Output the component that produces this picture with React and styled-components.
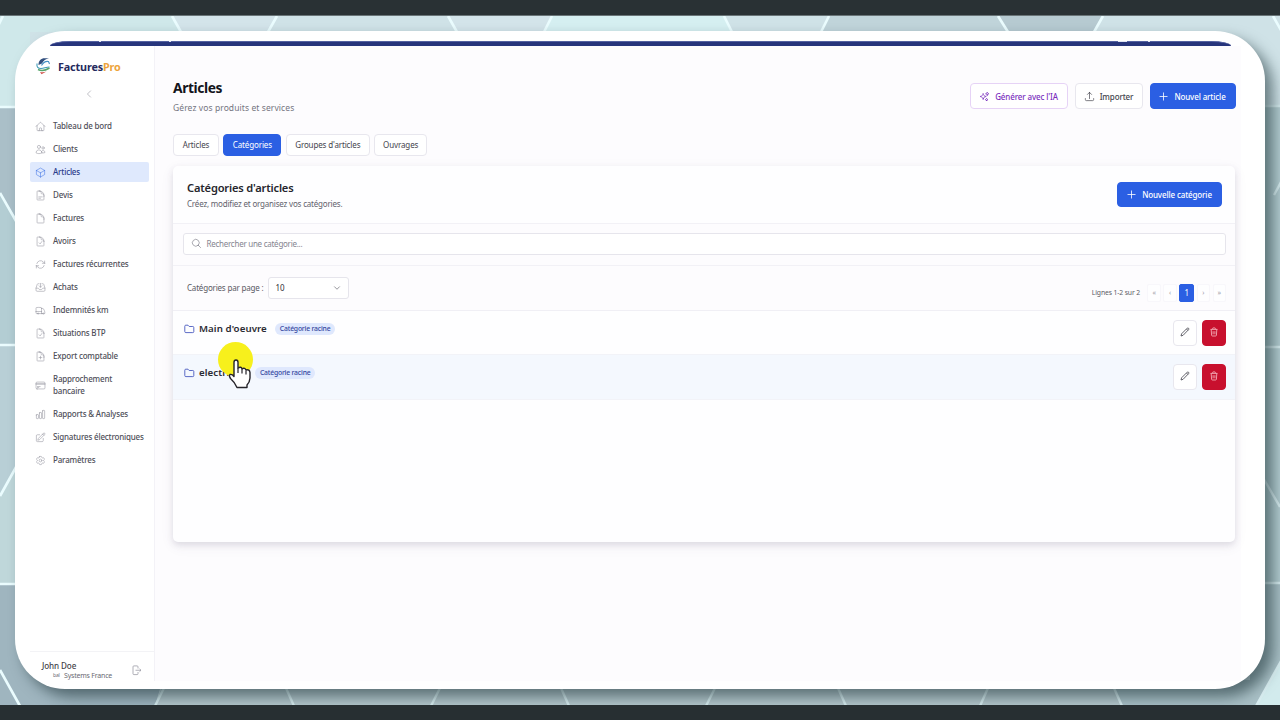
import React from "react";
import styled, { createGlobalStyle } from "styled-components";
import {
  HiOutlineHome, HiOutlineUsers, HiOutlineCube, HiOutlineDocumentCheck, HiOutlineDocument,
  HiOutlineArrowPath, HiOutlineInboxArrowDown, HiOutlineTruck, HiOutlineDocumentText,
  HiOutlineDocumentPlus, HiOutlineCreditCard, HiOutlineChartBar, HiOutlinePencilSquare,
  HiOutlineCog6Tooth, HiOutlineMagnifyingGlass, HiOutlineChevronLeft, HiOutlineChevronDown,
  HiOutlineSparkles, HiOutlineArrowUpTray
} from "react-icons/hi2";

const GlobalStyle = createGlobalStyle`
  * { box-sizing: border-box; }
  body {
    margin: 0;
    font-family: "Noto Sans", "Open Sans", sans-serif;
    overflow: hidden;
  }
  button, input { font-family: inherit; }
`;

const Screen = styled.div`
  position: relative;
  width: 1280px;
  height: 720px;
  padding: 31px 15px;
  overflow: hidden;
  background: #293134;
`;

const Backdrop = styled.svg`
  position: absolute;
  top: 0;
  left: 0;
`;

const Letterbox = styled.div`
  position: absolute;
  left: 0;
  right: 0;
  bottom: 0;
  height: 15px;
  background: #272f32;
`;

const Window = styled.div`
  position: relative;
  width: 1250px;
  height: 658px;
  padding: 10px 24px 8px 15px;
  border-radius: 50px;
  background: #fff;
  box-shadow: 8px 8px 14px rgba(20, 42, 48, 0.55);
  overflow: hidden;
`;

const TopBar = styled.div`
  position: relative;
  height: 5px;
  margin: 0 10px 0 20px;
  background: #27357c;
  border-top: 1px solid #5461a0;
  border-radius: 20px 20px 0 0 / 5px 5px 0 0;
`;

const Notch = styled.i`
  position: absolute;
  top: -1px;
  left: ${props => props.$left}px;
  width: ${props => props.$width || 2}px;
  height: 1px;
  background: #dfe3f2;
`;

const Layout = styled.div`
  display: flex;
  height: 635px;
`;

const Sidebar = styled.aside`
  display: flex;
  flex-direction: column;
  width: 125px;
  border-right: 1px solid #f3f2f7;
`;

const Brand = styled.div`
  display: flex;
  align-items: center;
  gap: 7px;
  height: 40px;
  padding-left: 6px;
  font-size: 10.8px;
  font-weight: 700;
  letter-spacing: -0.14px;
  color: #252a5e;

  em {
    font-style: normal;
    color: #eda43d;
  }
`;

const Collapse = styled.div`
  display: flex;
  justify-content: center;
  height: 30px;
  padding: 3px 6px 0 0;
  color: #9a9aa4;
  font-size: 10px;
`;

const Menu = styled.nav`
  display: flex;
  flex-direction: column;
  gap: 3px;
  margin-right: 5px;
`;

const MenuItem = styled.a`
  display: flex;
  align-items: center;
  gap: 7px;
  height: ${props => props.$tall ? 32 : 20}px;
  padding-left: 5px;
  border-radius: 2px;
  font-size: 8px;
  font-weight: 500;
  line-height: 12px;
  letter-spacing: -0.18px;
  white-space: nowrap;
  color: ${props => props.$active ? "#2b3c8c" : "#4f4f59"};
  background: ${props => props.$active ? "#dfe9fd" : "transparent"};

  span {
    width: ${props => props.$tall ? "70px" : "auto"};
    white-space: ${props => props.$tall ? "normal" : "nowrap"};
  }

  svg {
    flex: none;
    width: 11px;
    height: 11px;
    stroke-width: 1.3;
    color: ${props => props.$active ? "#4d7fe8" : "#9c9ca6"};
  }
`;

const Account = styled.div`
  display: flex;
  align-items: flex-start;
  justify-content: space-between;
  height: 30px;
  margin-top: auto;
  padding: 9px 12px 0 12px;
  border-top: 1px solid #f3f3f6;
  color: #9c9ca6;

  svg {
    margin-top: 4px;
  }
`;

const UserName = styled.div`
  font-size: 8.1px;
  font-weight: 500;
  line-height: 10px;
  letter-spacing: -0.1px;
  color: #3f3f48;
`;

const Company = styled.div`
  display: flex;
  gap: 2px;
  padding-left: 11px;
  font-size: 7px;
  line-height: 10px;
  letter-spacing: -0.2px;
  white-space: nowrap;
  color: #6a6a74;

  small {
    font-size: 5px;
    line-height: 8px;
    width: 9px;
  }
`;

const Main = styled.main`
  flex: 1;
  padding: 30px 6px 0 18px;
  background: #fdfcfe;
`;

const PageHead = styled.header`
  display: flex;
  justify-content: space-between;
  height: 57.5px;
`;

const Title = styled.h1`
  margin: 2px 0 0;
  font-size: 13.8px;
  line-height: 20px;
  letter-spacing: -0.4px;
  color: #14141b;
`;

const Subtitle = styled.p`
  margin: 3px 0 0;
  font-size: 8.5px;
  line-height: 14px;
  letter-spacing: 0.09px;
  color: #74747e;
`;

const Actions = styled.div`
  display: flex;
  gap: 7px;
  padding-top: 7px;
  margin-right: -0.5px;
`;

const Button = styled.button`
  display: flex;
  align-items: center;
  justify-content: center;
  gap: 5px;
  flex: none;
  width: ${props => props.$width}px;
  height: ${props => props.$height || 26}px;
  padding: 0;
  border: 1px solid ${props => props.$border || "#e8e7ee"};
  border-radius: 4px;
  background: #fff;
  color: ${props => props.$color || "#44444d"};
  font-size: 8px;
  font-weight: 500;
  letter-spacing: -0.13px;
  white-space: nowrap;
`;

const PrimaryButton = styled(Button)`
  gap: 6px;
  border-color: #2b5fe3;
  background: #2b5fe3;
  color: #fff;
`;

const Tabs = styled.div`
  display: flex;
  gap: 4.4px;
  margin-bottom: 10px;
`;

const Tab = styled(Button)`
  height: 22px;
  font-weight: 400;
  ${props => props.$active && `
    border-color: #2b5fe3;
    background: #2b5fe3;
    color: #fff;
  `}
`;

const Card = styled.section`
  height: 376px;
  border-radius: 5px;
  background: #fefeff;
  box-shadow: 0 3px 6px rgba(70, 60, 90, 0.13), 0 4px 14px rgba(90, 70, 120, 0.07);
`;

const CardHead = styled.div`
  display: flex;
  align-items: flex-start;
  justify-content: space-between;
  height: 58px;
  padding: 13px 13px 0 14px;
  border-bottom: 1px solid #f2f1f6;

  button {
    margin-top: 3px;
  }
`;

const CardTitle = styled.h2`
  margin: 1px 0 0;
  font-size: 11.1px;
  font-weight: 600;
  line-height: 16px;
  letter-spacing: -0.17px;
  color: #25252d;
`;

const CardText = styled.p`
  margin: 2px 0 0;
  font-size: 8px;
  line-height: 12px;
  letter-spacing: -0.19px;
  color: #62626c;
`;

const SearchRow = styled.div`
  height: 42px;
  padding: 9px 9px 0 10px;
  border-bottom: 1px solid #f2f1f6;
  background: #fdfcfe;
`;

const SearchBox = styled.div`
  display: flex;
  align-items: center;
  gap: 5px;
  height: 22px;
  padding-left: 6.5px;
  border: 1px solid #e6e5ec;
  border-radius: 3px;
  background: #fff;
  color: #85858f;
  font-size: 8px;
  letter-spacing: -0.26px;
`;

const Toolbar = styled.div`
  display: flex;
  justify-content: space-between;
  height: 45px;
  padding: 11px 9px 0 14px;
  border-bottom: 1px solid #f0eff5;
  background: #fdfcfe;
`;

const PerPage = styled.label`
  display: flex;
  align-items: center;
  gap: 5px;
  height: 22px;
  font-size: 8px;
  letter-spacing: -0.19px;
  color: #5a5a64;
`;

const Select = styled.span`
  display: flex;
  align-items: center;
  justify-content: space-between;
  width: 81px;
  height: 22px;
  padding: 0 7px 0 6px;
  border: 1px solid #e6e5ec;
  border-radius: 3px;
  background: #fff;
  color: #2f2f38;
  letter-spacing: 0;
`;

const Pager = styled.div`
  display: flex;
  align-items: center;
  gap: 2.4px;
  height: 18px;
  margin-top: 7px;
  font-size: 6.8px;
  letter-spacing: -0.12px;
  color: #5a5a64;

  > span:first-child {
    margin-right: 5px;
  }
`;

const PageButton = styled.span`
  display: flex;
  align-items: center;
  justify-content: center;
  width: ${props => props.$active ? 15 : 13.5}px;
  height: 18px;
  border: 1px solid ${props => props.$active ? "#2b5fe3" : "#f8f7fb"};
  border-radius: 2px;
  background: ${props => props.$active ? "#2b5fe3" : "#fefeff"};
  color: ${props => props.$active ? "#fff" : "#a4a4ae"};
  font-size: ${props => props.$active ? 8 : 7}px;
`;

const Row = styled.div`
  display: flex;
  justify-content: space-between;
  height: ${props => props.$hover ? 45 : 44}px;
  padding: 8px 9px 0 10.5px;
  border-bottom: 1px solid #f2f3f8;
  background: ${props => props.$hover ? "#f4f8fe" : "#fefeff"};
`;

const RowLabel = styled.div`
  display: flex;
  align-items: center;
  gap: 4.5px;
  height: 20px;
  font-size: 9.7px;
  font-weight: 600;
  letter-spacing: 0.08px;
  color: #2b2b33;
`;

const Badge = styled.span`
  height: 12px;
  margin-left: 4px;
  padding: 0 4.5px;
  border-radius: 6px;
  background: #dfe8fd;
  color: #3346a0;
  font-size: 6.8px;
  font-weight: 500;
  line-height: 11.5px;
  letter-spacing: -0.18px;
`;

const RowActions = styled.div`
  display: flex;
  gap: 5px;
  padding-top: 1px;
`;

const IconButton = styled.button`
  display: flex;
  align-items: center;
  justify-content: center;
  width: 24px;
  height: 26px;
  padding: 0 1px 1px 0;
  border: 1px solid ${props => props.$danger ? "#c8102e" : "#e8e7ee"};
  border-radius: 4px;
  background: ${props => props.$danger ? "#c8102e" : "#fff"};
`;

const Highlight = styled.div`
  position: absolute;
  left: 218px;
  top: 342px;
  width: 35px;
  height: 35px;
  border-radius: 50%;
  background: #f7f01c;
`;

const Hand = styled.svg`
  position: absolute;
  left: 226px;
  top: 358px;
`;

const Logo = () => (
  <svg width="15" height="18" viewBox="0 0 15 18" fill="none">
    <path d="M2.5 8C2.500 3.500 5 1.200 8.500 1.200H13C9.500 2 7.500 3.500 6 6.500Z" fill="#33507f" />
    <path d="M5.500 8.500C7.500 5 9.500 4 12.500 4.500L13.500 7" stroke="#4690c4" strokeWidth="1.1" />
    <path d="M1 6.500C0.500 10 2 11.500 5 11.500C8 11.500 10 10 13.500 10" stroke="#3f9bb8" strokeWidth="1.1" />
    <path d="M2 12.500C6 14.500 9.500 13.500 13.500 11" stroke="#57a56b" strokeWidth="1.5" />
    <path d="M4 15C6.500 15.500 8.500 15.200 10.500 14.500L5.500 17.300Z" fill="#d2574f" />
  </svg>
);

const Plus = () => (
  <svg width="9" height="9" viewBox="0 0 9 9" stroke="currentColor" strokeWidth="0.8">
    <path d="M4.5 0.5v8M0.500 4.500h8" />
  </svg>
);

const Folder = () => (
  <svg width="11" height="10" viewBox="0 0 11 10" fill="none" stroke="#4a5abf" strokeWidth="0.9">
    <path d="M0.800 2.200Q0.800 1.200 1.800 1.200H4L5.200 2.500H8.800Q9.800 2.500 9.800 3.500V7.600Q9.800 8.600 8.800 8.600H1.800Q0.800 8.600 0.800 7.600Z" />
  </svg>
);

const Pencil = () => (
  <svg width="10" height="10" viewBox="0 0 10 10" fill="none" stroke="#55555e" strokeWidth="0.9" strokeLinejoin="round">
    <path d="M1 9L1.600 6.800L7.300 1.100Q7.900 0.700 8.500 1.200Q9.100 1.900 8.700 2.500L3.100 8.300ZM6.500 2L7.900 3.400" />
  </svg>
);

const Trash = () => (
  <svg width="8" height="10" viewBox="0 0 8 10" fill="none" stroke="#f7bfc7" strokeWidth="0.8" strokeLinejoin="round">
    <path d="M0.500 2.400H7.500M2.700 2.300V1.400Q2.700 0.900 3.200 0.900H4.800Q5.300 0.900 5.300 1.400V2.300M1.200 2.500L1.600 8.300Q1.700 9 2.400 9H5.600Q6.300 9 6.400 8.300L6.800 2.500M3.100 4.200V7.300M4.900 4.200V7.300" />
  </svg>
);

const Logout = () => (
  <svg width="10" height="11" viewBox="0 0 10 11" fill="none" stroke="currentColor" strokeWidth="0.8">
    <path d="M6 3.500V1.800Q6 0.900 5.100 0.900H1.900Q1 0.900 1 1.800V8.700Q1 9.600 1.900 9.600H5.100Q6 9.600 6 8.700V7M3.500 5.250H9M7.500 3.800L9 5.250L7.500 6.700" />
  </svg>
);

// hexagon wallpaper, only its edges show around the window
const HexPattern = () => (
  <Backdrop width="1280" height="720" viewBox="0 0 1280 720">
    <path d="M0 15H1280V706H0Z" fill="#cfe2e7" />
    <path d="M0 15H172L181 32H30V107H0Z" fill="#cfe8ea" />
    <path d="M172 16H277L268 32H181ZM448 16H552L544 32H457Z" fill="#d3e4ea" />
    <path d="M552 16H724L732 32H544Z" fill="#d5eff1" />
    <path d="M829 16H998L1008 32H821Z" fill="#c0d4da" />
    <path d="M998 16H1103L1094 32H1008Z" fill="#b6cad1" />
    <path d="M0 107H30V240L0 193Z" fill="#aabfc8" />
    <path d="M0 193L30 247V345H0Z" fill="#b3cdd3" />
    <path d="M0 345H30V440L0 495Z" fill="#b8cfd6" />
    <path d="M0 495L30 440V583H0Z" fill="#bfd7da" />
    <path d="M0 583H30L160 689L155 706H0Z" fill="#9fb5bf" />
    <path d="M155 706L164 680H1122V706Z" fill="#b5c8cd" />
    <path d="M1250 107H1280V583H1250Z" fill="#b4cdd1" />
    <path d="M1250 583H1280V662L1256 706H1122L1110 680H1250Z" fill="#a9c0c6" />
    <path d="M1280 662V706H1256Z" fill="#d2ebed" />
    <path
      d="M172 16L181 32M277 16L268 32M448 16L457 32M552 16L544 32M724 16L732 32M829 16L821 32M998 16L1008 32M1103 16L1094 32M1273 16L1282 32M3 16L-3 28M0 107H20M0 193L20 228M0 345H20M0 496L20 460M0 584H20M0 670L20 706"
      stroke="#eafcfe"
      strokeWidth="2.6"
      fill="none"
    />
    <path
      d="M164 688L155 706M286 688L294 706M440 688L431 706M561 688L569 706M715 688L706 706M838 688L846 706M988 688L980 706M1114 688L1122 706M1260 106H1280M1274 195L1281 182M1260 347H1280M1262 476L1280 507M1260 583H1280M1256 706L1281 661"
      stroke="#d8edf0"
      strokeWidth="2.4"
      fill="none"
    />
    <path d="M0 15.500H1280" stroke="#697477" />
  </Backdrop>
);

const menu = [
  { label: "Tableau de bord", icon: HiOutlineHome },
  { label: "Clients", icon: HiOutlineUsers },
  { label: "Articles", icon: HiOutlineCube, active: true },
  { label: "Devis", icon: HiOutlineDocumentText },
  { label: "Factures", icon: HiOutlineDocument },
  { label: "Avoirs", icon: HiOutlineDocumentCheck },
  { label: "Factures récurrentes", icon: HiOutlineArrowPath },
  { label: "Achats", icon: HiOutlineInboxArrowDown },
  { label: "Indemnités km", icon: HiOutlineTruck },
  { label: "Situations BTP", icon: HiOutlineDocumentCheck },
  { label: "Export comptable", icon: HiOutlineDocumentPlus },
  { label: "Rapprochement bancaire", icon: HiOutlineCreditCard, tall: true },
  { label: "Rapports & Analyses", icon: HiOutlineChartBar },
  { label: "Signatures électroniques", icon: HiOutlinePencilSquare },
  { label: "Paramètres", icon: HiOutlineCog6Tooth }
];

const tabs = [
  { label: "Articles", width: 46 },
  { label: "Catégories", width: 58, active: true },
  { label: "Groupes d'articles", width: 84 },
  { label: "Ouvrages", width: 53 }
];

const CategoryRow = ({ name, hover }) => (
  <Row $hover={hover}>
    <RowLabel><Folder />{name}<Badge>Catégorie racine</Badge></RowLabel>
    <RowActions>
      <IconButton><Pencil /></IconButton>
      <IconButton $danger><Trash /></IconButton>
    </RowActions>
  </Row>
);

const App = () => (
  <>
    <GlobalStyle />
    <Screen>
      <HexPattern />
      <Window>
        <TopBar>
          <Notch $left={49} />
          <Notch $left={119} />
          <Notch $left={1068} $width={9} />
          <Notch $left={1098} />
        </TopBar>
        <Layout>
          <Sidebar>
            <Brand><Logo /><span>Factures<em>Pro</em></span></Brand>
            <Collapse><HiOutlineChevronLeft /></Collapse>
            <Menu>
              {menu.map(({ label, icon: Icon, active, tall }) => (
                <MenuItem key={label} $active={active} $tall={tall}><Icon /><span>{label}</span></MenuItem>
              ))}
            </Menu>
            <Account>
              <div>
                <UserName>John Doe</UserName>
                <Company><small>bal</small>Systems France</Company>
              </div>
              <Logout />
            </Account>
          </Sidebar>
          <Main>
            <PageHead>
              <div>
                <Title>Articles</Title>
                <Subtitle>Gérez vos produits et services</Subtitle>
              </div>
              <Actions>
                <Button $width={98} $border="#e6d3f6" $color="#7b2fbe"><HiOutlineSparkles size={11} />Générer avec l'IA</Button>
                <Button $width={68}><HiOutlineArrowUpTray size={11} />Importer</Button>
                <PrimaryButton $width={86}><Plus />Nouvel article</PrimaryButton>
              </Actions>
            </PageHead>
            <Tabs>
              {tabs.map(tab => (
                <Tab key={tab.label} $width={tab.width} $active={tab.active}>{tab.label}</Tab>
              ))}
            </Tabs>
            <Card>
              <CardHead>
                <div>
                  <CardTitle>Catégories d'articles</CardTitle>
                  <CardText>Créez, modifiez et organisez vos catégories.</CardText>
                </div>
                <PrimaryButton $width={105} $height={25}><Plus />Nouvelle catégorie</PrimaryButton>
              </CardHead>
              <SearchRow>
                <SearchBox><HiOutlineMagnifyingGlass size={11} />Rechercher une catégorie...</SearchBox>
              </SearchRow>
              <Toolbar>
                <PerPage>Catégories par page :<Select>10<HiOutlineChevronDown size={8} /></Select></PerPage>
                <Pager>
                  <span>Lignes 1-2 sur 2</span>
                  <PageButton>«</PageButton>
                  <PageButton>‹</PageButton>
                  <PageButton $active>1</PageButton>
                  <PageButton>›</PageButton>
                  <PageButton>»</PageButton>
                </Pager>
              </Toolbar>
              <CategoryRow name="Main d'oeuvre" />
              <CategoryRow name="electricité" hover />
            </Card>
          </Main>
        </Layout>
      </Window>
      <Letterbox />
      <Highlight />
      <Hand width="27" height="32" viewBox="0 0 27 32">
        <path
          d="M8 17V4.200Q8 2 10 2T12 4.200V10Q15 8.200 16 10.800Q19 9.300 20 12Q23.500 11 24 14.500V20Q23.800 24 21 27V29.500H11Q9 24.500 4.500 20.500Q2.500 17.500 4 16.500Q6 15.800 8 18.500Z"
          fill="#fff"
          stroke="#26242a"
          strokeWidth="1.4"
          strokeLinejoin="round"
        />
        <path d="M12 10v5M16 11v4.500M20 12.500v4" stroke="#26242a" strokeWidth="1.2" />
      </Hand>
    </Screen>
  </>
);

export default App;
